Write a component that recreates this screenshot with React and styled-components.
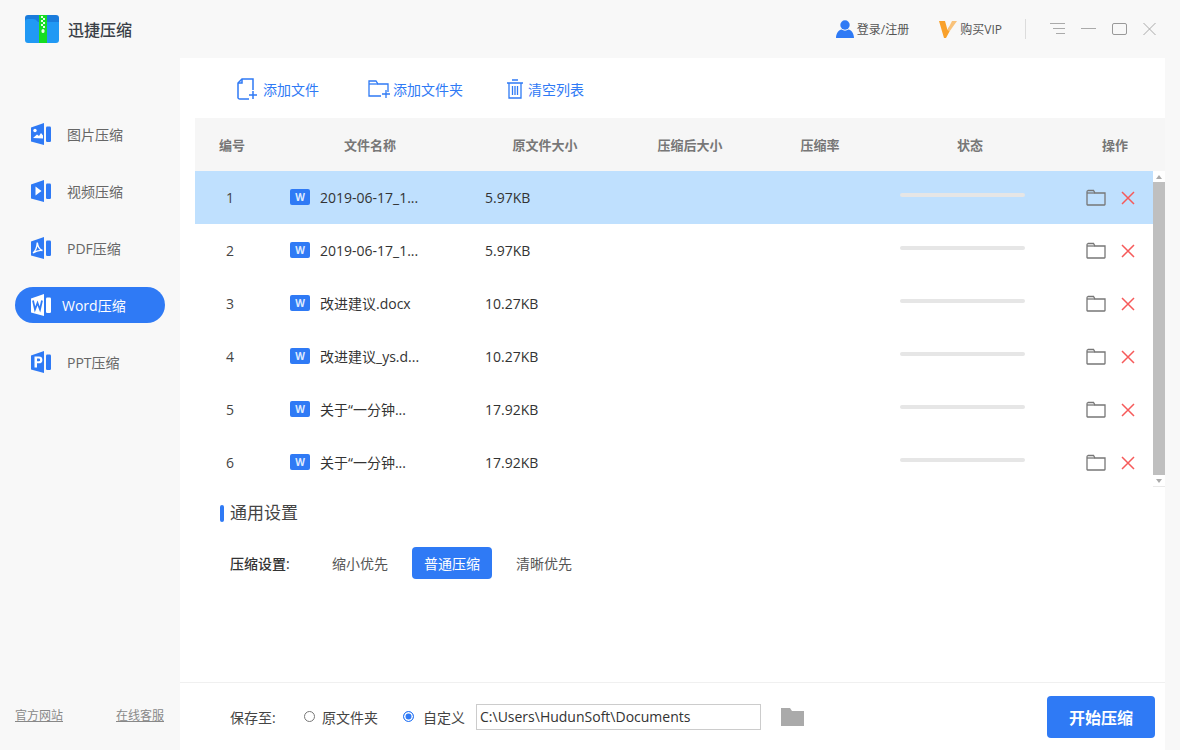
import React from "react";
import styled, { createGlobalStyle } from "styled-components";

const Global = createGlobalStyle`
  html, body { margin: 0; padding: 0; background: #f8f8f8; }
  * { box-sizing: border-box; }
  body { font-family: "Open Sans", "Noto Sans CJK SC", sans-serif; }
`;
const BLUE = "#2f7af5";

const Shell = styled.div`
  width: 1180px; height: 750px; display: flex; flex-direction: column;
  background: #f8f8f8; overflow: hidden;
`;
const Header = styled.header`
  height: 58px; flex: none; display: flex; align-items: center; padding: 0 24px 0 25px;
`;
const Brand = styled.div`
  display: flex; align-items: center; gap: 9px; font-size: 16px; font-weight: 500; color: #3a3f47;
`;
const HeaderRight = styled.div`
  margin-left: auto; display: flex; align-items: center;
`;
const HeaderLink = styled.div`
  display: flex; align-items: center; gap: 3px; font-size: 12px; color: #555; margin-right: ${p => p.$mr}px;
`;
const Divider = styled.div`
  width: 1px; height: 20px; background: #dcdcdc; margin-right: 24px;
`;
const WinButtons = styled.div`
  display: flex; align-items: center; gap: 16px; color: #999;
`;
const Body = styled.div`
  flex: 1; display: flex; min-height: 0;
`;
const Sidebar = styled.aside`
  width: 180px; flex: none; display: flex; flex-direction: column; padding: 58px 15px 26px;
`;
const NavList = styled.nav`
  display: flex; flex-direction: column; gap: 21px;
`;
const NavItem = styled.div`
  height: 36px; border-radius: 18px; display: flex; align-items: center;
  padding-left: 16px; gap: ${p => p.$active ? 11 : 16}px; font-size: 14px;
  background: ${p => p.$active ? BLUE : "transparent"};
  color: ${p => p.$active ? "#fff" : "#666"};
`;
const SideFoot = styled.div`
  margin-top: auto; display: flex; justify-content: space-between; padding-right: 1px;
  font-size: 12px; color: #888; text-decoration: underline;
`;
const Main = styled.main`
  width: 985px; flex: none; background: #fff; display: flex; flex-direction: column;
`;
const Toolbar = styled.div`
  height: 60px; flex: none; display: flex; align-items: center; padding: 2px 0 0 57px;
`;
const ToolButton = styled.div`
  display: flex; align-items: center; gap: ${p => p.$gap}px; font-size: 14px; color: ${BLUE};
  margin-right: ${p => p.$mr}px;
`;
const TablePanel = styled.section`
  margin-left: 15px; display: flex; flex-direction: column; border-bottom: 1px solid #e9e9e9;
`;
const columns = "70px 210px 140px 150px 110px 190px 1fr";
const HeadRow = styled.div`
  height: 53px; display: grid; grid-template-columns: ${columns}; align-items: center;
  background: #f6f6f6; font-size: 13px; font-weight: 600; color: #777;
`;
const HeadCell = styled.div`
  text-align: center; padding-left: ${p => p.$pl || 0}px;
`;
const ListWrap = styled.div`
  display: flex; height: 315px;
`;
const Rows = styled.div`
  flex: 1; min-width: 0;
`;
const Row = styled.div`
  height: 53px; display: grid; grid-template-columns: ${columns}; align-items: center;
  background: ${p => p.$selected ? "#bfe0fe" : "#fff"}; font-size: 14px; color: #333;
`;
const NumCell = styled.div`
  text-align: center; color: #444;
`;
const NameCell = styled.div`
  display: flex; align-items: center; gap: 10px; padding-left: 25px; margin-top: -1px;
`;
const WordBadge = styled.span`
  width: 20px; height: 16px; border-radius: 2px; background: ${BLUE}; color: #dfeaff;
  font: 700 10px/16px "Open Sans", sans-serif; text-align: center; flex: none;
`;
const SizeCell = styled.div`
  padding-left: 10px;
`;
const Progress = styled.div`
  width: 125px; height: 4px; border-radius: 2px; background: #e6e6e6; margin: -5px 0 0 25px;
`;
const Actions = styled.div`
  display: flex; align-items: center; gap: 15px; padding-left: 21px;
`;
const Scrollbar = styled.div`
  width: 12px; flex: none; display: flex; flex-direction: column; background: #fff;
`;
const ScrollArrow = styled.div`
  height: 11px; flex: none; display: flex; align-items: center; justify-content: center;
  &::after {
    content: ""; border-left: 3.5px solid transparent; border-right: 3.5px solid transparent;
    ${p => p.$down ? "border-top: 4px solid #aaa;" : "border-bottom: 4px solid #aaa;"}
  }
`;
const ScrollThumb = styled.div`
  flex: 1; background: #bfbfbf;
`;
const Settings = styled.section`
  flex: 1; padding: 17px 0 0 40px;
`;
const SettingsTitle = styled.h2`
  margin: 0; font-size: 17px; font-weight: 400; color: #444; line-height: 18px; height: 18px;
  display: flex; align-items: center; gap: 6px;
  &::before { content: ""; width: 4px; height: 17px; border-radius: 2px; background: ${BLUE}; }
`;
const OptionRow = styled.div`
  margin-top: 25px; padding-left: 10px; display: flex; align-items: center; font-size: 14px; color: #333;
`;
const OptionLabel = styled.span`
  width: 80px; font-weight: 500;
`;
const OptionGroup = styled.div`
  margin-left: 10px; display: flex; gap: 12px;
`;
const OptionButton = styled.div`
  width: 80px; height: 32px; border-radius: 4px; display: flex; align-items: center; justify-content: center;
  font-size: 14px; background: ${p => p.$active ? BLUE : "transparent"}; color: ${p => p.$active ? "#fff" : "#555"};
`;
const SaveBar = styled.footer`
  height: 68px; flex: none; border-top: 1px solid #f0f0f0; display: flex; align-items: center;
  padding-left: 50px; font-size: 14px; color: #444;
`;
const SaveLabel = styled.span`
  width: 74px;
`;
const RadioItem = styled.label`
  display: flex; align-items: center; gap: ${p => p.$gap}px; margin-right: ${p => p.$mr}px; font-size: 14px;
`;
const Radio = styled.span`
  width: 11px; height: 11px; border-radius: 50%; flex: none;
  border: 1px solid ${p => p.$on ? BLUE : "#777"};
  background: ${p => p.$on ? BLUE : "#fff"};
  box-shadow: ${p => p.$on ? "inset 0 0 0 1.5px #fff" : "none"};
`;
const PathInput = styled.div`
  width: 285px; height: 26px; border: 1px solid #ccc; padding-left: 3px;
  font-size: 14px; line-height: 24px; color: #333; background: #fff; margin-right: 20px;
`;
const StartButton = styled.button`
  margin-left: auto; margin-right: 10px; width: 108px; height: 42px; border: 0; border-radius: 4px;
  background: ${BLUE}; color: #fff; font: 700 16px "Noto Sans CJK SC", sans-serif;
`;

const Logo = () => (
  <svg width="34" height="28" viewBox="0 0 34 28">
    <path d="M3 0H31a3 3 0 0 1 3 3V8H0V3a3 3 0 0 1 3-3z" fill="#1a7cdc" />
    <path d="M0 7a3 3 0 0 1 3-3h5q3 0 4 2l1 1h21v18a3 3 0 0 1-3 3H3a3 3 0 0 1-3-3z" fill="#2199f4" />
    <rect x="14" y="0" width="8" height="28" fill="#16dc23" />
    <path d="M16 1h2v2h-2zM18 3h2v2h-2zM16 5h2v2h-2zM18 7h2v2h-2zM16 9h2v2h-2zM18 11h2v2h-2z" fill="#e4ffe6" />
    <rect x="16.5" y="14" width="3" height="4" rx="1.5" fill="#e4ffe6" />
  </svg>
);
const SideIcon = ({ color, children }) => (
  <svg width="20" height="22" viewBox="0 0 20 22">
    <path d="M0 4.5 13 0v22L0 18.5z" fill={color} />
    <rect x="15" y="3.5" width="5" height="15.5" rx="1.2" fill={color} />
    {children}
  </svg>
);
const navIcons = {
  image: c => <g fill={c}><circle cx="4" cy="7.5" r="1.7" /><path d="M2 15l4-3.5 2 1.5 2-3 2 2.5V15.500z" /></g>,
  video: c => <path d="M4.500 6.500 10.500 11l-6 4.500z" fill={c} />,
  pdf: c => <path d="M2 16C4.500 14 6 10 6.300 5.500 6.800 10 8.500 12.500 11.500 13.500 8 13 5 14 2 16z" fill="none" stroke={c} strokeWidth="1.400" />,
  word: c => <path d="M2 6.500 4 15.500 6.500 9 9 15.500 11 6.500" fill="none" stroke={c} strokeWidth="1.800" />,
  ppt: c => <path fillRule="evenodd" d="M3.500 5.500h4.500a3.200 3.200 0 0 1 0 6.800H6V16.500H3.500zM6 7.500v2.800h1.800a1.400 1.400 0 0 0 0-2.800z" fill={c} />,
};
const User = () => (
  <svg width="18" height="18" viewBox="0 0 18 18"><circle cx="9" cy="5" r="4.700" fill={BLUE} /><path d="M0 18c0-5 3-8 5.500-8.500 2 1.500 5 1.500 7 0C15 10 18 13 18 18z" fill={BLUE} /></svg>
);
const Vip = () => (
  <svg width="18" height="18" viewBox="0 0 18 18"><path d="M0 1h6l2.500 9 2-4v5.500L7 18H5z" fill="#f9a12b" /><path d="M8.500 10 13 1h5l-7.500 10.500z" fill="#f9c27a" /></svg>
);
const Menu = () => (
  <svg width="15" height="12" viewBox="0 0 15 12" fill="none" stroke="#aaa"><path d="M0 .5h15M3 5.500h12M6 10.500h9" /></svg>
);
const Minimize = () => <svg width="15" height="12" viewBox="0 0 15 12" fill="none" stroke="#aaa"><path d="M0 5.500h15" /></svg>;
const Maximize = () => <svg width="15" height="12" viewBox="0 0 15 12" fill="none" stroke="#999"><rect x=".5" y=".5" width="14" height="11" rx="1.500" /></svg>;
const Close = () => <svg width="13" height="12" viewBox="0 0 13 12" fill="none" stroke="#aaa"><path d="M.5 0l12 12M12.500 0 .5 12" /></svg>;
const AddFile = () => (
  <svg width="20" height="22" viewBox="0 0 20 22" fill="none" stroke={BLUE} strokeWidth="1.500">
    <path d="M12 21H3a2 2 0 0 1-2-1V5l4-4h11v11" /><path d="M5 1v4H1" /><path d="M12 17h8M16 13v8" />
  </svg>
);
const AddFolder = () => (
  <svg width="22" height="18" viewBox="0 0 22 18" fill="none" stroke={BLUE} strokeWidth="1.300">
    <path d="M13 16H1V1h7l2 3h10v8" /><path d="M1 4h9" /><path d="M14 14h8M18 10v8" />
  </svg>
);
const Trash = () => (
  <svg width="16" height="20" viewBox="0 0 16 20" fill="none" stroke={BLUE} strokeWidth="1.300">
    <path d="M0 4h16M5 1h6" /><path d="M2 4v15h12V4" /><path d="M5.500 7v9M8 7v9M10.500 7v9" />
  </svg>
);
const FolderOutline = () => (
  <svg width="20" height="17" viewBox="0 0 20 17" fill="none" stroke="#777" strokeWidth="1.300">
    <path d="M1 3a1.500 1.500 0 0 1 1-1.500h5.500L9 4h10v11.500a.5.5 0 0 1-.5.5H1.500a.5.5 0 0 1-.5-.5z" /><path d="M1 4h8" />
  </svg>
);
const RedX = () => (
  <svg width="14" height="14" viewBox="0 0 14 14" fill="none" stroke="#f65a5a" strokeWidth="1.500"><path d="M1 1l12 12M13 1 1 13" /></svg>
);
const FolderSolid = () => (
  <svg width="23" height="19" viewBox="0 0 23 19"><path d="M0 1h9l2 3h12v15H0z" fill="#aaa" /></svg>
);

const nav = [
  { label: "图片压缩", icon: "image" },
  { label: "视频压缩", icon: "video" },
  { label: "PDF压缩", icon: "pdf" },
  { label: "Word压缩", icon: "word", active: true },
  { label: "PPT压缩", icon: "ppt" },
];
const files = [
  ["1", "2019-06-17_1...", "5.97KB"],
  ["2", "2019-06-17_1...", "5.97KB"],
  ["3", "改进建议.docx", "10.27KB"],
  ["4", "改进建议_ys.d...", "10.27KB"],
  ["5", "关于“一分钟...", "17.92KB"],
  ["6", "关于“一分钟...", "17.92KB"],
];

export default function App() {
  return (
    <Shell>
      <Global />
      <Header>
        <Brand><Logo />迅捷压缩</Brand>
        <HeaderRight>
          <HeaderLink $mr={30}><User />登录/注册</HeaderLink>
          <HeaderLink $mr={23}><Vip />购买VIP</HeaderLink>
          <Divider />
          <WinButtons><Menu /><Minimize /><Maximize /><Close /></WinButtons>
        </HeaderRight>
      </Header>
      <Body>
        <Sidebar>
          <NavList>
            {nav.map(n => (
              <NavItem key={n.label} $active={n.active}>
                <SideIcon color={n.active ? "#fff" : BLUE}>{navIcons[n.icon](n.active ? BLUE : "#fff")}</SideIcon>
                {n.label}
              </NavItem>
            ))}
          </NavList>
          <SideFoot><span>官方网站</span><span>在线客服</span></SideFoot>
        </Sidebar>
        <Main>
          <Toolbar>
            <ToolButton $gap={6} $mr={49}><AddFile />添加文件</ToolButton>
            <ToolButton $gap={3} $mr={44}><AddFolder />添加文件夹</ToolButton>
            <ToolButton $gap={5} $mr={0}><Trash />清空列表</ToolButton>
          </Toolbar>
          <TablePanel>
            <HeadRow>
              <HeadCell $pl={4}>编号</HeadCell>
              <HeadCell>文件名称</HeadCell>
              <HeadCell>原文件大小</HeadCell>
              <HeadCell>压缩后大小</HeadCell>
              <HeadCell>压缩率</HeadCell>
              <HeadCell>状态</HeadCell>
              <HeadCell>操作</HeadCell>
            </HeadRow>
            <ListWrap>
              <Rows>
                {files.map((f, i) => (
                  <Row key={f[0]} $selected={i === 0}>
                    <NumCell>{f[0]}</NumCell>
                    <NameCell><WordBadge>W</WordBadge>{f[1]}</NameCell>
                    <SizeCell>{f[2]}</SizeCell>
                    <div /><div />
                    <Progress />
                    <Actions><FolderOutline /><RedX /></Actions>
                  </Row>
                ))}
              </Rows>
              <Scrollbar>
                <ScrollArrow />
                <ScrollThumb />
                <ScrollArrow $down />
              </Scrollbar>
            </ListWrap>
          </TablePanel>
          <Settings>
            <SettingsTitle>通用设置</SettingsTitle>
            <OptionRow>
              <OptionLabel>压缩设置:</OptionLabel>
              <OptionGroup>
                <OptionButton>缩小优先</OptionButton>
                <OptionButton $active>普通压缩</OptionButton>
                <OptionButton>清晰优先</OptionButton>
              </OptionGroup>
            </OptionRow>
          </Settings>
          <SaveBar>
            <SaveLabel>保存至:</SaveLabel>
            <RadioItem $gap={7} $mr={25}><Radio />原文件夹</RadioItem>
            <RadioItem $gap={9} $mr={11}><Radio $on />自定义</RadioItem>
            <PathInput>C:\Users\HudunSoft\Documents</PathInput>
            <FolderSolid />
            <StartButton>开始压缩</StartButton>
          </SaveBar>
        </Main>
      </Body>
    </Shell>
  );
}
